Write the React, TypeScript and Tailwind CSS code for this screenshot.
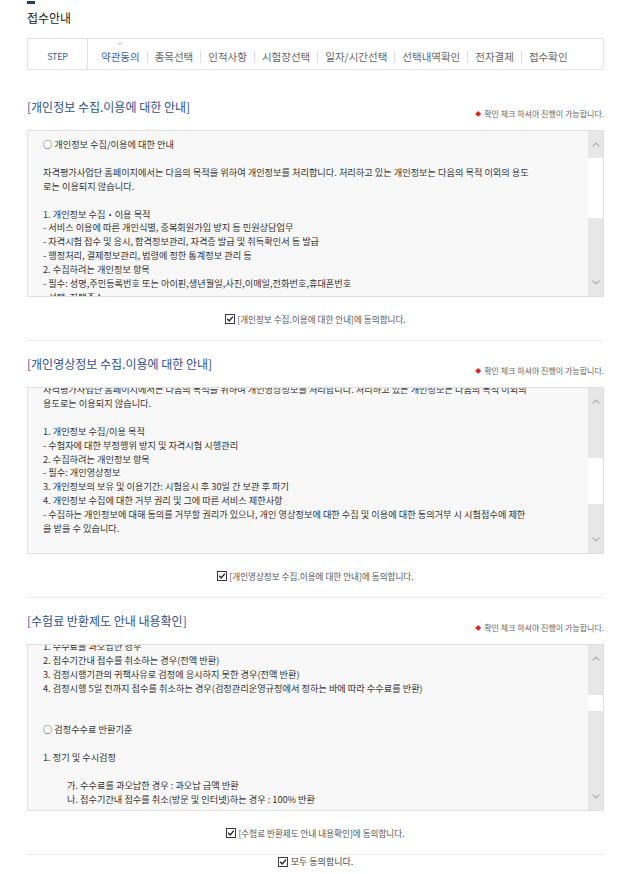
import type { ReactNode } from 'react';

type Line = string | { text: string; indent: true };

const STEPS = ['약관동의', '종목선택', '인적사항', '시험장선택', '일자/시간선택', '선택내역확인', '전자결제', '접수확인'];

const PRIVACY: Line[] = [
  '○ 개인정보 수집/이용에 대한 안내',
  '',
  '자격평가사업단 홈페이지에서는 다음의 목적을 위하여 개인정보를 처리합니다. 처리하고 있는 개인정보는 다음의 목적 이외의 용도',
  '로는 이용되지 않습니다.',
  '',
  '1. 개인정보 수집・이용 목적',
  '- 서비스 이용에 따른 개인식별, 중복회원가입 방지 등 민원상담업무',
  '- 자격시험 접수 및 응시, 합격정보관리, 자격증 발급 및 취득확인서 등 발급',
  '- 행정처리, 결제정보관리, 법령에 정한 통계정보 관리 등',
  '2. 수집하려는 개인정보 항목',
  '- 필수: 성명,주민등록번호 또는 아이핀,생년월일,사진,이메일,전화번호,휴대폰번호',
  '- 선택: 자택주소',
];

// scrolled part-way: text above the visible area is left out
const VIDEO: Line[] = [
  '자격평가사업단 홈페이지에서는 다음의 목적을 위하여 개인영상정보를 처리합니다. 처리하고 있는 개인정보는 다음의 목적 이외의',
  '용도로는 이용되지 않습니다.',
  '',
  '1. 개인정보 수집/이용 목적',
  '- 수험자에 대한 부정행위 방지 및 자격시험 시행관리',
  '2. 수집하려는 개인정보 항목',
  '- 필수: 개인영상정보',
  '3. 개인정보의 보유 및 이용기간: 시험응시 후 30일 간 보관 후 파기',
  '4. 개인정보 수집에 대한 거부 권리 및 그에 따른 서비스 제한사항',
  '- 수집하는 개인정보에 대해 동의를 거부할 권리가 있으나, 개인 영상정보에 대한 수집 및 이용에 대한 동의거부 시 시험접수에 제한',
  '을 받을 수 있습니다.',
];

const REFUND: Line[] = [
  '1. 수수료를 과오납한 경우',
  '2. 접수기간내 접수를 취소하는 경우(전액 반환)',
  '3. 검정시행기관의 귀책사유로 검정에 응시하지 못한 경우(전액 반환)',
  '4. 검정시행 5일 전까지 접수를 취소하는 경우(검정관리운영규정에서 정하는 바에 따라 수수료를 반환)',
  '',
  '',
  '○ 검정수수료 반환기준',
  '',
  '1. 정기 및 수시검정',
  '',
  { text: '가. 수수료를 과오납한 경우 : 과오납 금액 반환', indent: true },
  { text: '나. 접수기간내 접수를 취소(방문 및 인터넷)하는 경우 : 100% 반환', indent: true },
];

function Chevron({ up }: { up?: boolean }) {
  return (
    <svg width="8" height="5" viewBox="0 0 8 5" fill="none">
      <path d={up ? 'M0.6 4.4L4 1L7.4 4.4' : 'M0.6 0.6L4 4L7.4 0.6'} stroke="#adadad" strokeWidth="1.2" />
    </svg>
  );
}

function CheckBox() {
  return (
    <span className="flex h-[10px] w-[10px] shrink-0 items-center justify-center border border-[#3a3a3a] bg-white">
      <svg width="8" height="8" viewBox="0 0 8 8" fill="none">
        <path d="M1.2 3.8L3.2 5.9L6.9 1.6" stroke="#222" strokeWidth="1.4" />
      </svg>
    </span>
  );
}

function Scrollbar({ before, thumb }: { before: string; thumb: string }) {
  return (
    <div className="flex w-[15px] flex-col bg-[#e7e7e7]">
      <div className="flex h-[27px] items-center justify-center">
        <Chevron up />
      </div>
      <div className={before} />
      <div className={`bg-white ${thumb}`} />
      <div className="flex-1" />
      <div className="flex h-[27px] items-center justify-center">
        <Chevron />
      </div>
    </div>
  );
}

interface SectionProps {
  title: string;
  agree: string;
  lines: Line[];
  offset: string;
  before: string;
  thumb: string;
  first?: boolean;
}

function Section({ title, agree, lines, offset, before, thumb, first }: SectionProps) {
  return (
    <section className={first ? '' : 'border-t border-[#ececec]'}>
      <div className="flex h-[46px] items-start justify-between pt-[15px]">
        <h3 className="text-[12px] leading-[16px] text-[#2f4f93]">{title}</h3>
        <p className="mt-[10px] flex items-center gap-[3px] text-[8px] leading-[10px] text-[#666]">
          <span className="text-[6px] text-[#d7261e]">◆</span>
          확인 체크 하셔야 진행이 가능합니다.
        </p>
      </div>
      <div className="flex h-[167px] border border-[#e0e0e0] bg-[#f8f8f8]">
        <div className="flex-1 overflow-hidden pl-[15px] pt-[7px]">
          <div className={offset}>
            {lines.map((line, i) => {
              const text = typeof line === 'string' ? line : line.text;
              const indent = typeof line !== 'string';
              return (
                <div
                  key={i}
                  className={`whitespace-pre text-[9.2px] leading-[13.9px] text-[#333] ${indent ? 'pl-[24px]' : ''}`}
                >
                  {text || '\u00a0'}
                </div>
              );
            })}
          </div>
        </div>
        <Scrollbar before={before} thumb={thumb} />
      </div>
      <Agree>{agree}</Agree>
    </section>
  );
}

function Agree({ children }: { children: ReactNode }) {
  return (
    <div className="flex h-[43px] items-center justify-center gap-[2px]">
      <CheckBox />
      <span className="text-[8.6px] leading-[12px] text-[#555]">{children}</span>
    </div>
  );
}

export default function App() {
  return (
    <div className="min-h-[874px] bg-white font-['Noto_Sans_CJK_KR','Noto_Sans',sans-serif]">
      <div className="ml-[27px] w-[577px]">
        <div className="mt-[1px] h-[3px] w-[8px] bg-[#2b3a5c]" />
        <h2 className="mt-[7px] text-[12px] leading-[14px] text-[#222]">접수안내</h2>

        <nav className="mt-[13px] flex h-[32px] border border-[#e3e3e3]">
          <div className="flex w-[60px] items-center justify-center border-r border-[#e3e3e3] pt-[6px] text-[9px] tracking-tight text-[#3d5fa6]">
            STEP
          </div>
          <ol className="flex items-center pl-[13px] pt-[6px]">
            {STEPS.map((s, i) => (
              <li key={s} className="flex items-center">
                {i > 0 && <span className="mx-[7px] h-[12px] w-px bg-[#dcdcdc]" />}
                <span
                  className={`relative text-[10.5px] leading-[12px] ${i === 0 ? 'text-[#3d5fa6]' : 'text-[#666]'}`}
                >
                  {i === 0 && (
                    <span className="absolute left-1/2 top-[-9px] -translate-x-1/2">
                      <svg width="5" height="3" viewBox="0 0 5 3" fill="none">
                        <path d="M0.5 0.5L2.5 2.5L4.5 0.5" stroke="#9a9a9a" strokeWidth="0.8" />
                      </svg>
                    </span>
                  )}
                  {s}
                </span>
              </li>
            ))}
          </ol>
        </nav>

        <div className="mt-[14px]">
          <Section
            first
            title="[개인정보 수집.이용에 대한 안내]"
            agree="[개인정보 수집.이용에 대한 안내]에 동의합니다."
            lines={PRIVACY}
            offset="mt-0"
            before="h-0"
            thumb="h-[60px]"
          />
          <Section
            title="[개인영상정보 수집.이용에 대한 안내]"
            agree="[개인영상정보 수집.이용에 대한 안내]에 동의합니다."
            lines={VIDEO}
            offset="mt-[-12px]"
            before="h-[43px]"
            thumb="h-[46px]"
          />
          <Section
            title="[수험료 반환제도 안내 내용확인]"
            agree="[수험료 반환제도 안내 내용확인]에 동의합니다."
            lines={REFUND}
            offset="mt-[-12px]"
            before="h-[23px]"
            thumb="h-[16px]"
          />
          <div className="flex h-[14px] items-center justify-center gap-[3px] border-t border-[#ececec]">
            <CheckBox />
            <span className="text-[9px] leading-[12px] text-[#444]">모두 동의합니다.</span>
          </div>
        </div>
      </div>
    </div>
  );
}
